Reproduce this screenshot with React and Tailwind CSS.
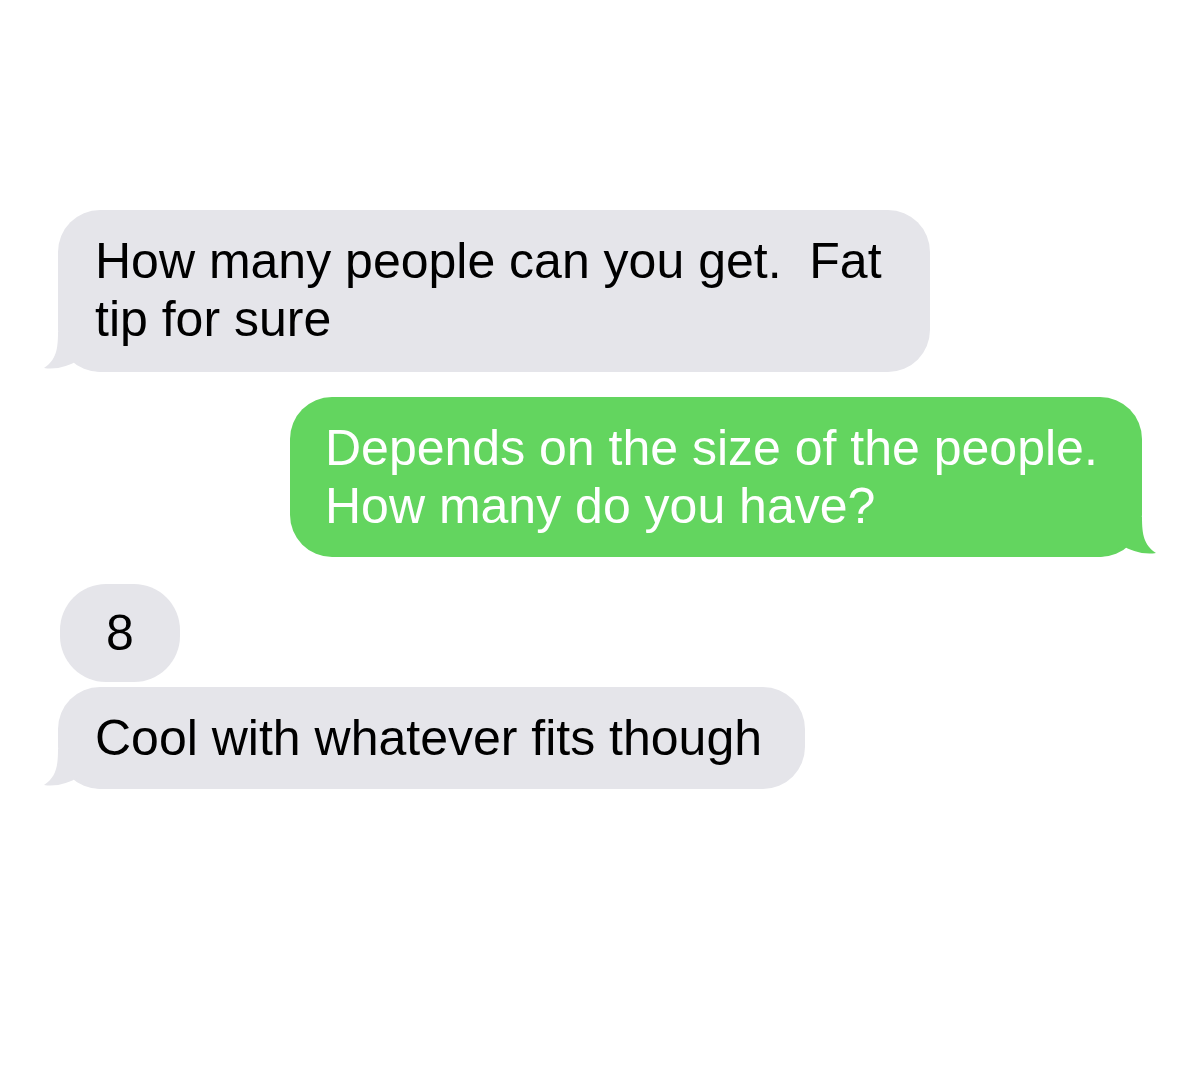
const Tail = ({ color, side }) => (
    <svg
        width="62"
        height="40"
        viewBox="0 0 62 40"
        className={side === "right" ? "absolute -right-4 bottom-0 -scale-x-100" : "absolute -left-4 bottom-0"}
    >
        <path d="M16 0 C16 18 14 28 2 36 C14 38 28 34 36 28 C42 35 50 40 62 40 L62 0 Z" fill={color} />
    </svg>
);

const Bubble = ({ children, mine, tail, className }) => {
    const color = mine ? "#63d55f" : "#e5e5ea";
    return (
        <div
            className={`relative rounded-[42px] text-[50px] leading-[58px] ${mine ? "bg-[#63d55f] text-white" : "bg-[#e5e5ea] text-black"} ${className}`}
        >
            {tail && <Tail color={color} side={mine ? "right" : "left"} />}
            <div className="relative">{children}</div>
        </div>
    );
};

export default function App() {
    return (
        <div
            className="min-h-[1068px] w-[1200px] bg-white pt-[210px] px-[58px] flex flex-col"
            style={{ fontFamily: '"Liberation Sans", Arial, sans-serif' }}
        >
            <Bubble tail className="w-[872px] pl-[37px] pt-[22px] pb-[24px] self-start">
                How many people can you get.&nbsp; Fat
                <br />
                tip for sure
            </Bubble>

            <Bubble mine tail className="mt-[25px] w-[852px] pl-[35px] py-[22px] self-end">
                Depends on the size of the people.
                <br />
                How many do you have?
            </Bubble>

            <Bubble className="mt-[27px] self-start w-[120px] h-[98px] rounded-[46px] flex items-center justify-center ml-[2px]">
                8
            </Bubble>

            <Bubble tail className="mt-[5px] self-start w-[747px] pl-[37px] py-[22px]">
                Cool with whatever fits though
            </Bubble>
        </div>
    );
}
